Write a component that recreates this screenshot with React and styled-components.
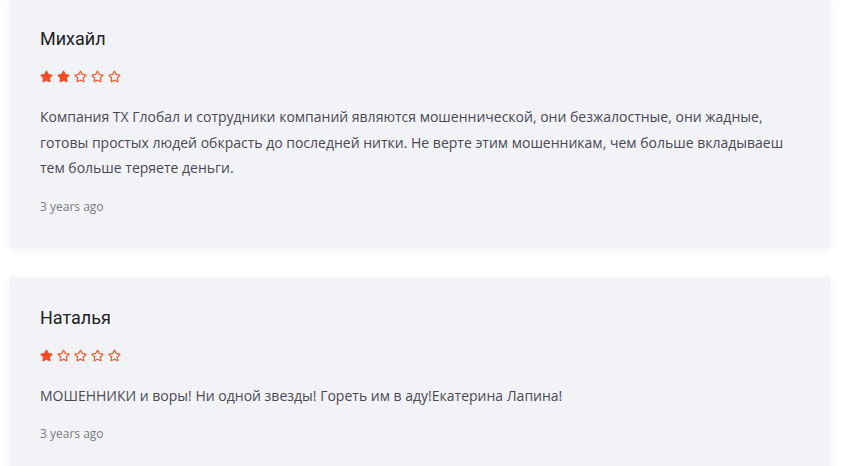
import React from 'react';
import styled, { createGlobalStyle } from 'styled-components';
import { FaStar, FaRegStar } from 'react-icons/fa';

const GlobalStyle = createGlobalStyle`
  body {
    margin: 0;
    background: #fff;
    font-family: "Open Sans", "Liberation Sans", sans-serif;
  }
`;

const List = styled.div`
  width: 820px;
  margin: -2px 0 0 10px;
  display: flex;
  flex-direction: column;
  gap: 30px;
`;

const Card = styled.div`
  background: #f2f3f7;
  box-shadow: 0 2px 8px rgba(0, 0, 0, 0.06);
  padding: 30px 30px 31px;
`;

const Name = styled.div`
  font-family: Roboto, "Liberation Sans", sans-serif;
  font-size: 18px;
  line-height: 22px;
  color: #222;
`;

const Stars = styled.div`
  display: flex;
  gap: 4px;
  margin-top: 20px;
  height: 13px;
  color: #fc4a1f;

  svg {
    width: 13px;
    height: 13px;
  }
`;

const Text = styled.p`
  margin: 21px 0 0;
  font-size: 14px;
  line-height: 25.5px;
  color: #4b4855;
`;

const Date = styled.div`
  margin-top: 17px;
  font-size: 12px;
  line-height: 18px;
  color: #7a7a80;
`;

const reviews = [
  {
    name: 'Михайл',
    rating: 2,
    text: 'Компания ТХ Глобал и сотрудники компаний являются мошеннической, они безжалостные, они жадные, готовы простых людей обкрасть до последней нитки. Не верте этим мошенникам, чем больше вкладываеш тем больше теряете деньги.',
  },
  {
    name: 'Наталья',
    rating: 1,
    text: 'МОШЕННИКИ и воры! Ни одной звезды! Гореть им в аду!Екатерина Лапина!',
  },
];

export default function App() {
  return (
    <>
      <GlobalStyle />
      <List>
        {reviews.map(r => (
          <Card key={r.name}>
            <Name>{r.name}</Name>
            <Stars>
              {[1, 2, 3, 4, 5].map(i =>
                i <= r.rating ? <FaStar key={i} /> : <FaRegStar key={i} />
              )}
            </Stars>
            <Text>{r.text}</Text>
            <Date>3 years ago</Date>
          </Card>
        ))}
      </List>
    </>
  );
}
